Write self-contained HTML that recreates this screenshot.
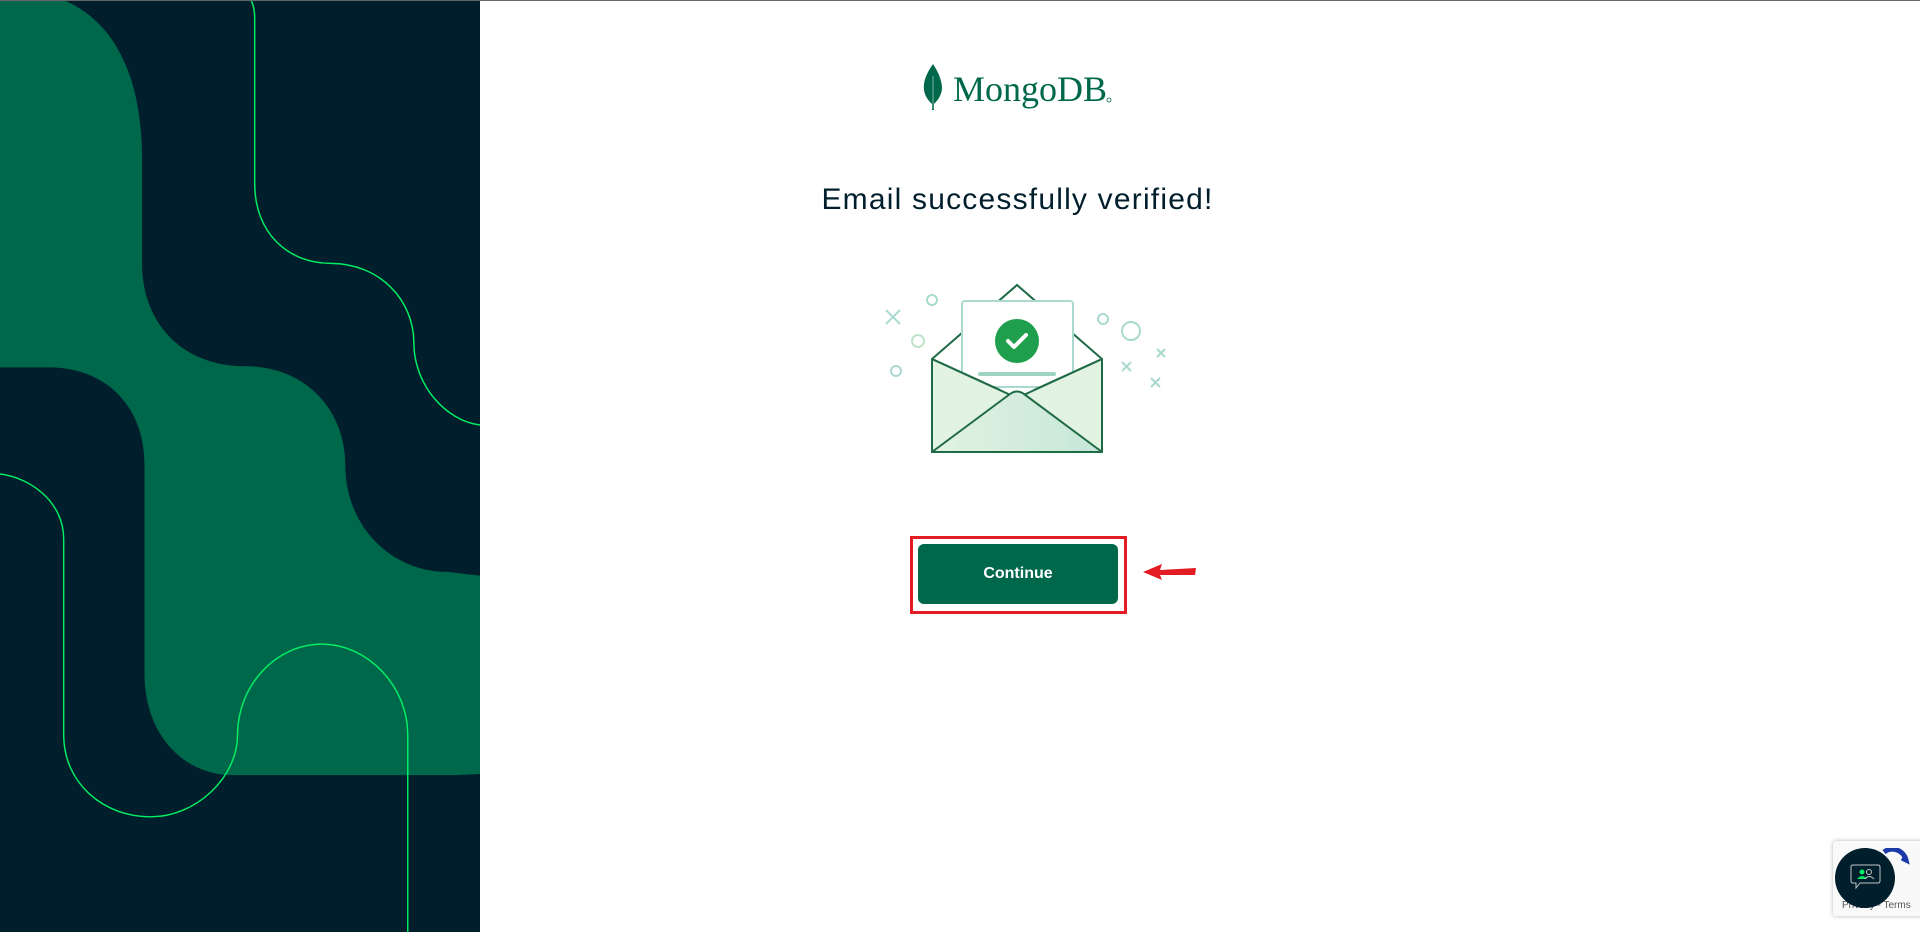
<!DOCTYPE html>
<html><head><meta charset="utf-8"><style>
html,body{margin:0;padding:0;width:1920px;height:932px;overflow:hidden;background:#fff;font-family:"Liberation Sans",sans-serif;}
.left{position:absolute;left:0;top:0;width:480px;height:932px;background:#001E2B;}
.topline{position:absolute;left:0;top:0;width:1920px;height:1px;background:#666;}
</style></head><body>
<svg class="left" width="480" height="932" viewBox="0 0 392 761">
<rect width="392" height="761" fill="#001E2B"/>
<path d="M0,0 L52,0 C95,18 116,65 116,130 L116,215 C116,265 150,299 200,299 C250,299 282,335 282,380 C282,430 320,467 365,467 L392,470 L392,632 L372,633 L190,633 C150,633 118,600 118,550 L118,380 C118,330 85,300 40,300 L0,300 Z" fill="#00684A"/>
<path d="M205,0 C207,4 208,9 208,15 L208,150 C208,190 235,215 270,215 C310,215 338,245 338,280 C338,315 365,344 392,347" fill="none" stroke="#00ED64" stroke-width="1.2"/>
<path d="M0,387 C25,390 52,410 52,440 L52,600 C52,640 85,667 123,667 C160,667 194,635 194,600 C194,560 225,526 263,526 C300,526 333,560 333,600 L333,761" fill="none" stroke="#00ED64" stroke-width="1.2"/>
</svg>
<div class="topline"></div>

<svg style="position:absolute;left:920px;top:62px" width="200" height="50" viewBox="0 0 200 50">
<path d="M13,2 C6,12 3,20 4,28 C5,35 9,39 12,42 L12,48 L14,48 L14,42 C18,38 21,34 22,27 C22,19 19,11 13,2 Z" fill="#00684A"/>
<line x1="13" y1="14" x2="13" y2="47" stroke="#fff" stroke-width="0.8" opacity="0.6"/>
<text x="33" y="39" font-family="Liberation Serif, serif" font-size="36" fill="#00684A">MongoDB</text>
<circle cx="189" cy="38" r="2" fill="none" stroke="#00684A" stroke-width="0.8"/>
</svg>

<div style="position:absolute;left:480px;width:1075px;top:183px;text-align:center;font-size:30px;color:#001E2B;letter-spacing:1.2px;">Email successfully verified!</div>

<svg style="position:absolute;left:870px;top:275px" width="310" height="185" viewBox="870 275 310 185">
<defs><linearGradient id="g" x1="0" x2="1"><stop offset="0" stop-color="#e3f3e1"/><stop offset="1" stop-color="#c5e6d8"/></linearGradient></defs>
<path d="M932,359 L1017,285 L1102,359" fill="none" stroke="#1f6b46" stroke-width="2"/>
<rect x="962" y="301" width="111" height="86" rx="3" fill="#fff" stroke="#a9d9cf" stroke-width="2"/>
<circle cx="1017" cy="341" r="22" fill="#1f9f4e"/>
<path d="M1008,341 L1014,347 L1026,335" fill="none" stroke="#fff" stroke-width="4" stroke-linecap="round" stroke-linejoin="round"/>
<rect x="978" y="372" width="78" height="4" rx="2" fill="#9fd3c3"/>
<path d="M932,359 L932,452 L1102,452 L1102,359 L1017,398 Z" fill="#e3f3e1" stroke="#1f6b46" stroke-width="2" stroke-linejoin="round"/>
<path d="M932,452 L1010,394 Q1017,389 1024,394 L1102,452 Z" fill="url(#g)" stroke="#1f6b46" stroke-width="2" stroke-linejoin="round"/>
<path d="M932,359 L1000,390 M1102,359 L1034,390" stroke="#1f6b46" stroke-width="2"/>
<g fill="none" stroke="#a9d9cf" stroke-width="2">
<path d="M886,310 L900,324 M900,310 L886,324"/>
<circle cx="932" cy="300" r="5"/><circle cx="918" cy="341" r="6" stroke="#bfe3c9"/><circle cx="896" cy="371" r="5"/>
<circle cx="1103" cy="319" r="5"/><circle cx="1131" cy="331" r="9"/>
<path d="M1122,362 L1131,371 M1131,362 L1122,371 M1157,349 L1165,357 M1165,349 L1157,357 M1151,378 L1160,387 M1160,378 L1151,387"/>
</g>
</svg>

<div style="position:absolute;left:910px;top:536px;width:211px;height:72px;border:3px solid #e31b23;"></div>
<div style="position:absolute;left:918px;top:544px;width:200px;height:60px;border-radius:6px;background:#00684A;color:#fff;font-weight:bold;font-size:16px;line-height:60px;text-align:center;">Continue</div>
<svg style="position:absolute;left:1140px;top:560px" width="60" height="25"><path d="M3,12 L22,4 L20,10 L56,8 L55,15 L20,15 L22,20 Z" fill="#e31b23"/></svg>

<div style="position:absolute;left:1833px;top:841px;width:90px;height:75px;background:#f9f9f9;box-shadow:0 0 4px rgba(0,0,0,0.3);border-radius:3px;"></div>
<svg style="position:absolute;left:1880px;top:848px" width="30" height="30"><path d="M4,4 A14,14 0 0 1 26,12 L22,10" fill="none" stroke="#1c3aa9" stroke-width="5"/></svg>
<div style="position:absolute;left:1842px;top:900px;font-size:10px;color:#555;">Privacy - Terms</div>
<div style="position:absolute;left:1835px;top:848px;width:60px;height:60px;border-radius:50%;background:#001E2B;"></div>
<svg style="position:absolute;left:1850px;top:863px" width="32" height="32" viewBox="0 0 32 32">
<path d="M3,2 H28 Q30,2 30,4 V18 Q30,20 28,20 H10 L6,25 L6,20 H3 Q1,20 1,18 V4 Q1,2 3,2 Z" fill="none" stroke="#c1c7c6" stroke-width="1"/>
<circle cx="12" cy="9" r="2.5" fill="#00ED64"/><path d="M7,16 Q12,10 17,16 Z" fill="#00ED64"/>
<circle cx="19" cy="9" r="2.5" fill="none" stroke="#c1c7c6"/><path d="M15,16 Q19,11 24,16" fill="none" stroke="#c1c7c6"/>
</svg>
</body></html>
